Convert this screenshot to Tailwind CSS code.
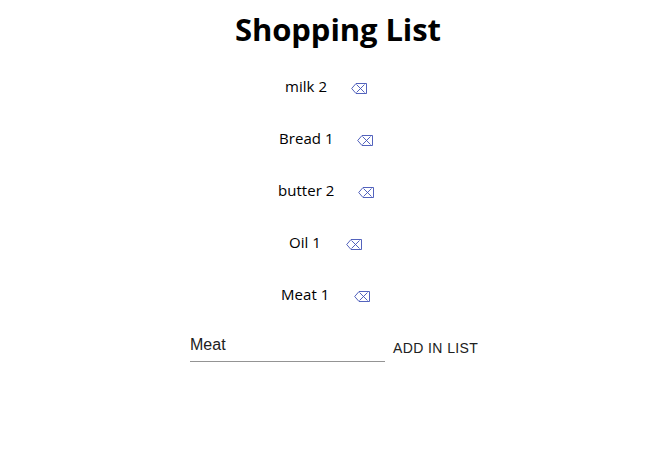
<!DOCTYPE html>
<html lang="en"><head><meta charset="utf-8"><title>Shopping List</title>
<script src="https://cdn.jsdelivr.net/npm/@tailwindcss/browser@4"></script></head>
<body class="bg-white text-black font-['Open_Sans',sans-serif] overflow-hidden">
<svg class="hidden"><symbol id="erase" viewBox="0 0 16 11"><path d="M5 .5H15.5V10.5H5L.7 5.5ZM5.5 1.5L13.5 9.5M13.5 1.5L5.5 9.5" fill="none" stroke="currentColor" stroke-width=".9"/></symbol></svg>
<main class="w-[665px] h-[460px]">
<h1 class="pl-[235px] pt-[7px] h-[61px] text-[31px] leading-[44px] tracking-[-0.1px] font-bold whitespace-nowrap">Shopping List</h1>
<ul class="text-[15px] leading-[50px] tracking-[0.05px] whitespace-nowrap">
<li class="flex h-[52px] items-center pl-[285px]"><span class="w-[66px] h-[52px]">milk 2</span><svg class="mt-[2px] w-4 h-[11px] text-[#3f51b5]"><use href="#erase"/></svg></li>
<li class="flex h-[52px] items-center pl-[279px]"><span class="w-[78px] h-[52px]">Bread 1</span><svg class="mt-[2px] w-4 h-[11px] text-[#3f51b5]"><use href="#erase"/></svg></li>
<li class="flex h-[52px] items-center pl-[278px]"><span class="w-[80px] h-[52px]">butter 2</span><svg class="mt-[2px] w-4 h-[11px] text-[#3f51b5]"><use href="#erase"/></svg></li>
<li class="flex h-[52px] items-center pl-[289px]"><span class="w-[57px] h-[52px]">Oil 1</span><svg class="mt-[2px] w-4 h-[11px] text-[#3f51b5]"><use href="#erase"/></svg></li>
<li class="flex h-[52px] items-center pl-[281px]"><span class="w-[73px] h-[52px]">Meat 1</span><svg class="mt-[2px] w-4 h-[11px] text-[#3f51b5]"><use href="#erase"/></svg></li>
</ul>
<form class="flex pl-[190px] pt-[8px] font-['Liberation_Sans',sans-serif]"><input value="Meat" class="w-[195px] h-[33px] border-b border-[#949494] text-[16px] text-[#212121]"><button type="button" class="ml-2 h-[38px] text-[14px] tracking-[0.4px] whitespace-nowrap text-[#212121]">ADD IN LIST</button></form>
</main></body></html>
